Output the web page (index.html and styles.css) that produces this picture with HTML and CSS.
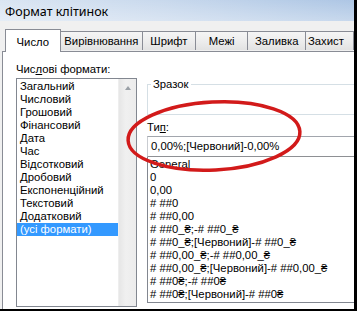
FILE: index.html
```html
<!DOCTYPE html>
<html lang="uk">
<head>
<meta charset="utf-8">
<title>Формат клітинок</title>
<link rel="stylesheet" href="styles.css">
</head>
<body>
<div class="window">
  <div class="titlebar">Формат клітинок</div>
  <div class="client">
    <div class="tabs">
      <div class="tab active t1">Число</div>
      <div class="tab t2">Вирівнювання</div>
      <div class="tab t3">Шрифт</div>
      <div class="tab t4">Межі</div>
      <div class="tab t5">Заливка</div>
      <div class="tab t6">Захист</div>
    </div>
    <div class="panel">
      <div class="leftcol">
        <div class="label">Чис<u>л</u>ові формати:</div>
        <div class="listbox">
          <ul class="cats">
            <li>Загальний</li>
            <li>Числовий</li>
            <li>Грошовий</li>
            <li>Фінансовий</li>
            <li>Дата</li>
            <li>Час</li>
            <li>Відсотковий</li>
            <li>Дробовий</li>
            <li>Експоненційний</li>
            <li>Текстовий</li>
            <li>Додатковий</li>
            <li class="sel">(усі формати)</li>
          </ul>
          <div class="scrollbar"><span class="uparrow"></span></div>
        </div>
      </div>
      <div class="rightcol">
        <fieldset class="sample"><legend>Зразок</legend></fieldset>
        <div class="label typelabel">Ти<u>п</u>:</div>
        <div class="input">0,00%;[Червоний]-0,00%</div>
        <ul class="types">
          <li>General</li>
          <li>0</li>
          <li>0,00</li>
          <li># ##0</li>
          <li># ##0,00</li>
          <li># ##0_₴;-# ##0_₴</li>
          <li># ##0_₴;[Червоний]-# ##0_₴</li>
          <li># ##0,00_₴;-# ##0,00_₴</li>
          <li># ##0,00_₴;[Червоний]-# ##0,00_₴</li>
          <li># ##0₴;-# ##0₴</li>
          <li># ##0₴;[Червоний]-# ##0₴</li>
        </ul>
      </div>
    </div>
  </div>
  <svg class="mark" width="357" height="311" viewBox="0 0 357 311">
    <ellipse cx="214" cy="136" rx="86" ry="34" transform="rotate(-3 214 136)" fill="none" stroke="#d21a1a" stroke-width="3.5"/>
  </svg>
</div>
</body>
</html>
```

FILE: styles.css
```css
html, body {
  margin: 0;
  padding: 0;
}
body {
  width: 357px;
  height: 311px;
  overflow: hidden;
  background: #f0f0f0;
  font-family: "Liberation Sans", Arial, sans-serif;
  font-size: 11.3px;
  color: #000;
}
.window {
  position: relative;
  width: 357px;
  height: 311px;
  box-sizing: border-box;
  border-right: 3px solid #000;
  border-bottom: 2px solid #000;
  overflow: hidden;
  display: flex;
  flex-direction: column;
  background: #f0f0f0;
}
.titlebar {
  height: 21px;
  flex: none;
  line-height: 24px;
  padding-left: 5px;
  font-family: "Noto Sans", "Liberation Sans", sans-serif;
  font-size: 12.5px;
  color: #000;
  background:
    linear-gradient(to bottom, rgba(255,255,255,0.05), rgba(255,255,255,0.35)),
    linear-gradient(to right, #d8e4f2 0%, #c6d7ec 45%, #a9c3e3 100%);
}
.client {
  flex: 1;
  display: flex;
  flex-direction: column;
  padding: 8px 0 0 2px;
  min-height: 0;
}
.tabs {
  display: flex;
  align-items: flex-end;
  padding-left: 3px;
  height: 22px;
  position: relative;
  z-index: 1;
  flex: none;
}
.tab {
  box-sizing: border-box;
  height: 19px;
  line-height: 18px;
  text-align: center;
  white-space: nowrap;
  overflow: hidden;
  border: 1px solid #898c95;
  border-bottom: none;
  border-left: none;
  background: linear-gradient(to bottom, #f5f5f5 0%, #ececec 55%, #e2e2e2 100%);
  margin-bottom: 1px;
}
.tab.active {
  height: 23px;
  line-height: 24px;
  background: #fff;
  border-left: 1px solid #898c95;
  margin-bottom: -1px;
}
.t1 { width: 58px; }
.t2 { width: 86px; }
.t3 { width: 55px; }
.t4 { width: 55px; }
.t5 { width: 60px; }
.t6 { width: 50px; text-align: left; padding-left: 2px; }
.panel {
  flex: 1;
  background: #fff;
  border-top: 1px solid #898c95;
  border-left: 1px solid #898c95;
  display: flex;
  gap: 10px;
  padding: 11px 0 0 13px;
  min-height: 0;
}
.label {
  height: 13px;
  line-height: 13px;
  white-space: nowrap;
}
.label u {
  text-decoration-thickness: 1px;
  text-underline-offset: 1px;
}
.leftcol {
  width: 121px;
  flex: none;
  display: flex;
  flex-direction: column;
}
.leftcol .label {
  margin-bottom: 2px;
}
.listbox {
  flex: 1;
  border: 1px solid #828790;
  display: flex;
  margin-bottom: 2px;
}
.cats {
  list-style: none;
  margin: 0;
  padding: 1px 0 0 0;
  width: 102px;
}
.cats li {
  height: 13px;
  line-height: 13px;
  padding-left: 3px;
  white-space: nowrap;
}
.cats li.sel {
  background: #3399ff;
  color: #fff;
}
.scrollbar {
  width: 17px;
  background: linear-gradient(to right, #e6e6e6, #f0f0f0 40%, #ececec);
  border-left: 1px solid #eeeeee;
}
.uparrow {
  display: block;
  width: 0;
  height: 0;
  margin: 7px auto 0;
  border-left: 3.5px solid transparent;
  border-right: 3.5px solid transparent;
  border-bottom: 4px solid #9aa0a6;
}
.rightcol {
  flex: 1;
  display: flex;
  flex-direction: column;
  min-width: 0;
}
.sample {
  margin: 15px 0 0 0;
  padding: 0;
  height: 37px;
  box-sizing: border-box;
  border: 1px solid #d5dfe5;
  border-right: none;
  min-width: 0;
}
.sample legend {
  padding: 0 2px;
  margin-left: 3px;
  line-height: 12px;
  height: 12px;
}
.typelabel {
  margin-top: 6px;
}
.input {
  margin-top: 2px;
  height: 21px;
  box-sizing: border-box;
  line-height: 19px;
  padding-left: 3px;
  border-top: 1px solid #a2a6ad;
  border-left: 1px solid #c9ccd1;
  border-bottom: 1px solid #8e9094;
  white-space: nowrap;
}
.types {
  list-style: none;
  margin: 0;
  padding: 1px 0 0 2px;
  height: 146px;
  box-sizing: border-box;
  border-left: 1px solid #828790;
  border-bottom: 1px solid #828790;
}
.types li {
  height: 13px;
  line-height: 13px;
  white-space: nowrap;
}
.mark {
  position: absolute;
  left: 0;
  top: 0;
  pointer-events: none;
}
```
